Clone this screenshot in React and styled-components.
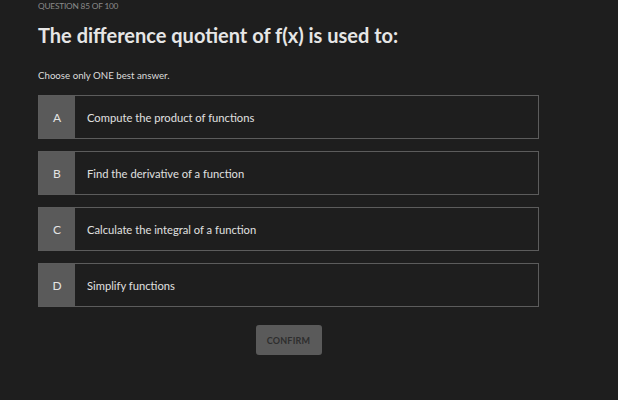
import styled, { createGlobalStyle } from 'styled-components';

const GlobalStyle = createGlobalStyle`
	html, body {
		margin: 0;
		padding: 0;
		background: #1e1e1e;
	}
	body {
		font-family: Lato, 'Noto Sans', sans-serif;
	}
`;

const options = [
	{ key: 'A', text: 'Compute the product of functions' },
	{ key: 'B', text: 'Find the derivative of a function' },
	{ key: 'C', text: 'Calculate the integral of a function' },
	{ key: 'D', text: 'Simplify functions' },
];

function App() {
	return (
		<Page>
			<GlobalStyle />
			<Counter>QUESTION 85 OF 100</Counter>
			<Title>The difference quotient of f(x) is used to:</Title>
			<Hint>Choose only ONE best answer.</Hint>
			<OptionList>
				{options.map((o) => (
					<Option key={o.key}>
						<Letter>{o.key}</Letter>
						<OptionText>{o.text}</OptionText>
					</Option>
				))}
			</OptionList>
			<Footer>
				<ConfirmButton disabled>CONFIRM</ConfirmButton>
			</Footer>
		</Page>
	);
}

export default App;

const Page = styled.div`
	width: 618px;
	height: 400px;
	box-sizing: border-box;
	padding: 0 79px 0 38px;
	background: #1e1e1e;
	display: flex;
	flex-direction: column;
`;

const Counter = styled.div`
	font-size: 8.3px;
	line-height: 13px;
	color: #8a8a8a;
	letter-spacing: -0.2px;
`;

const Title = styled.h1`
	margin: 9px 0 0;
	font-size: 20px;
	line-height: 26px;
	font-weight: 700;
	color: #e6e6e6;
`;

const Hint = styled.div`
	margin-top: 20px;
	font-size: 9.7px;
	line-height: 14px;
	color: #dcdcdc;
`;

const OptionList = styled.div`
	margin-top: 13px;
	display: flex;
	flex-direction: column;
	gap: 12px;
`;

const Option = styled.div`
	display: flex;
	height: 44px;
	box-sizing: border-box;
	border: 1px solid #5c5c5c;
	background: #1e1e1e;
`;

const Letter = styled.div`
	width: 36px;
	flex: none;
	display: flex;
	align-items: center;
	justify-content: center;
	background: #5a5a5a;
	color: #e4e4e4;
	font-size: 12px;
	font-weight: 400;
`;

const OptionText = styled.div`
	display: flex;
	align-items: center;
	padding-left: 12px;
	font-size: 11.2px;
	color: #e0e0e0;
`;

const Footer = styled.div`
	margin-top: 18px;
	display: flex;
	justify-content: center;
`;

const ConfirmButton = styled.button`
	width: 66px;
	height: 30px;
	border: none;
	border-radius: 3px;
	background: #5a5a5a;
	color: #2e2e2e;
	font-family: inherit;
	font-size: 9px;
	font-weight: 700;
	letter-spacing: 0.2px;
`;
